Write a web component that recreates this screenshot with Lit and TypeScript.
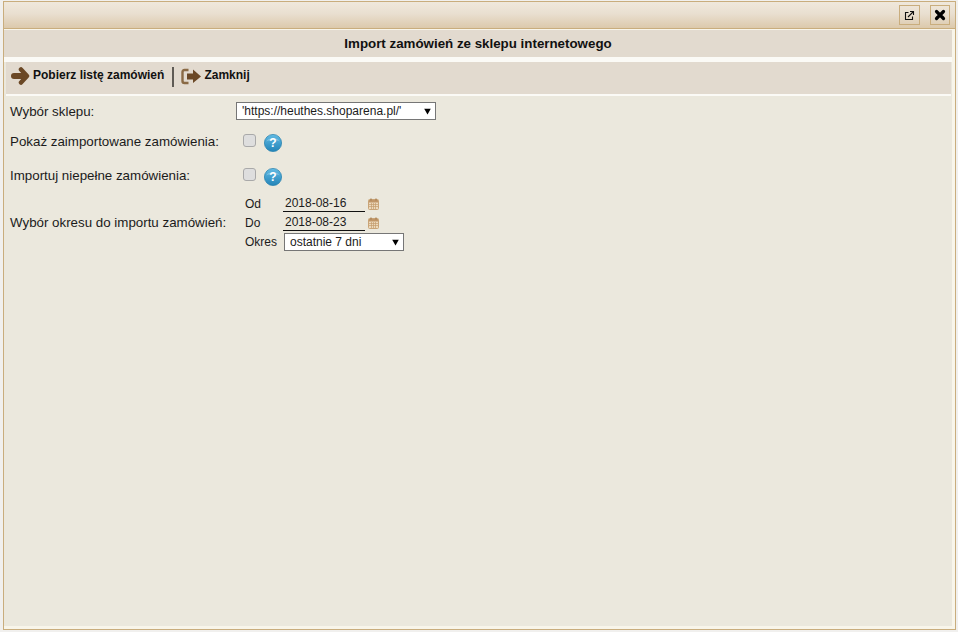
import { LitElement, html, css } from "lit";
import { customElement } from "lit/decorators.js";

const calendar = html`<svg class="cal" width="11" height="12" viewBox="0 0 11 12">
  <rect x=".5" y="1.500" width="10" height="10" rx="1" fill="#ecd9bc" stroke="#c9a477"/>
  <rect x="1" y="2" width="9" height="2.500" fill="#c09668"/>
  <path d="M3 .5v2M8 .5v2" stroke="#a57c50" stroke-width="1.200"/>
  <path d="M1 6.500h9M1 8.500h9M3.500 5v6M5.500 5v6M7.500 5v6" stroke="#c49c6e" stroke-width=".7"/>
</svg>`;

const help = html`<svg class="help" width="18" height="18" viewBox="0 0 18 18">
  <defs>
    <linearGradient id="hg" x1="0" y1="0" x2="0" y2="1">
      <stop offset="0" stop-color="#62bbe4"/><stop offset="1" stop-color="#2384b8"/>
    </linearGradient>
  </defs>
  <circle cx="9" cy="9" r="8.600" fill="url(#hg)" stroke="#2280ad" stroke-width=".7"/>
  <path d="M2.200 7.500C3.500 3 14.500 3 15.800 7.500C12 5.500 6 5.500 2.200 7.500Z" fill="#fff" opacity=".25"/>
  <text x="9" y="13.400" text-anchor="middle" class="q">?</text>
</svg>`;

@customElement("app-root")
export class AppRoot extends LitElement {
  static styles = css`
    :host {
      display: block;
      width: 958px;
      height: 632px;
      box-sizing: border-box;
      padding: 1px 2px 2px 3px;
      background: #f1f0ee;
      font-family: "Liberation Sans", Arial, sans-serif;
      font-size: 13.33px;
      color: #1b1b1b;
    }
    .window {
      height: 100%;
      box-sizing: border-box;
      border: 1px solid #c9ad7d;
      background: #f8f5ea;
      display: flex;
      flex-direction: column;
    }
    .titlebar {
      flex: none;
      height: 27px;
      box-sizing: border-box;
      border-bottom: 1px solid #c9ad7d;
      background: linear-gradient(#f0e8dc, #e9dfd0 45%, #dcc9ac);
      display: flex;
      align-items: center;
      justify-content: flex-end;
      gap: 10px;
      padding: 0 5px 0 0;
    }
    .tbtn {
      width: 20px;
      height: 20px;
      box-sizing: border-box;
      border: 1px solid #c9ad7d;
      display: flex;
      align-items: center;
      justify-content: center;
    }
    .tbtn.wide {
      width: 21px;
    }
    .body {
      flex: 1;
      display: flex;
      flex-direction: column;
      margin: 1px 3px 3px 0;
      background: #ebe8dd;
    }
    .heading {
      height: 27px;
      background: #e2dacf;
      font-weight: 700;
      color: #111;
      display: flex;
      align-items: center;
      justify-content: center;
    }
    .band {
      height: 5px;
      background: #fbfaf6;
    }
    .toolbar {
      margin: 0 1px 0 2px;
      height: 34px;
      box-sizing: border-box;
      border-bottom: 2px solid #fbfaf6;
      background: #e2dacf;
      display: flex;
      align-items: flex-start;
      padding: 4px 0 0 4px;
      font-weight: 700;
      font-size: 12px;
      color: #111;
    }
    .tool {
      display: flex;
      align-items: flex-start;
      gap: 3px;
    }
    .tool span {
      line-height: 14px;
      margin-top: 2px;
    }
    .sep {
      width: 2px;
      height: 20px;
      background: #5f5b55;
      margin: 1px 7px 0 8px;
    }
    .form {
      padding: 6px 0 0 6px;
      display: grid;
      grid-template-columns: 226px 1fr;
      line-height: 15px;
    }
    .r1 {
      height: 18px;
      display: flex;
      align-items: center;
    }
    .r2 {
      height: 34px;
      margin-top: 14px;
    }
    .r3 {
      height: 25px;
    }
    .check {
      display: flex;
      align-items: flex-start;
      padding-left: 7px;
    }
    input[type="checkbox"] {
      appearance: none;
      margin: 0;
      width: 13px;
      height: 13px;
      box-sizing: border-box;
      border: 1px solid #a9a9a9;
      border-radius: 3px;
      background: #dedede;
    }
    .help {
      margin-left: 8px;
    }
    .q {
      font: 700 12px "Liberation Sans", sans-serif;
      fill: #fff;
    }
    select {
      appearance: none;
      font: 12px "Liberation Sans", Arial, sans-serif;
      color: #1b1b1b;
      border: 1px solid #767676;
      border-radius: 0;
      height: 18px;
      margin: 0;
      background: #fff
        url("data:image/svg+xml,%3Csvg xmlns='http://www.w3.org/2000/svg' width='7' height='7'%3E%3Cpath d='M.2 .8H6.800L3.500 6.600Z' fill='%23000'/%3E%3C/svg%3E")
        no-repeat;
    }
    .shop {
      width: 200px;
      padding: 0 0 0 5px;
      background-position: 187px 5px;
    }
    .period {
      width: 120px;
      margin-left: 1px;
      padding: 0 0 0 5px;
      background-position: 107px 5px;
    }
    .wlabel {
      display: flex;
      align-items: center;
      padding-bottom: 2px;
    }
    .dates {
      display: grid;
      grid-template-columns: 38px auto;
      grid-template-rows: 19px 19px 22px;
      padding-left: 9px;
      align-items: center;
      font-size: 12px;
    }
    .tag {
      margin-top: 3px;
    }
    .date {
      display: flex;
      align-items: flex-end;
      height: 100%;
    }
    .period-cell {
      display: flex;
      align-items: center;
    }
    .dval {
      width: 82px;
      height: 18px;
      box-sizing: border-box;
      border-bottom: 1px solid #111;
      padding-left: 2px;
      line-height: 18px;
      margin-right: 3px;
    }
    .cal {
      display: block;
      margin-bottom: 2px;
    }
  `;

  render() {
    return html`
      <div class="window">
        <div class="titlebar">
          <div class="tbtn wide">
            <svg width="11" height="11" viewBox="0 0 11 11" fill="none" stroke="#111" stroke-width="1.100">
              <path d="M4.500 2.500H1.500V9.500H8.500V6.500"/>
              <path d="M4 7L9 2M6 1.500H9.500V5"/>
            </svg>
          </div>
          <div class="tbtn">
            <svg width="12" height="12" viewBox="0 0 12 12">
              <path d="M2.500 2.500L9.500 9.500M9.500 2.500L2.500 9.500" stroke="#000" stroke-width="3.200" stroke-linecap="round"/>
            </svg>
          </div>
        </div>
        <div class="body">
          <div class="heading">Import zamówień ze sklepu internetowego</div>
          <div class="band"></div>
          <div class="toolbar">
            <div class="tool">
              <svg width="20" height="20" viewBox="0 0 20 20">
                <path d="M4 10H15" fill="none" stroke="#6b4826" stroke-width="6" stroke-linecap="round"/>
                <path d="M11 3.500L17 10L11 16.500" fill="none" stroke="#6b4826" stroke-width="4.500" stroke-linecap="round" stroke-linejoin="round"/>
              </svg>
              <span>Pobierz listę zamówień</span>
            </div>
            <div class="sep"></div>
            <div class="tool">
              <svg width="20" height="20" viewBox="0 0 20 20">
                <path d="M7.500 4H3.500Q1.500 4 1.500 6V15Q1.500 17 3.500 17H7.500" fill="none" stroke="#8a6a45" stroke-width="2.400"/>
                <path d="M6 7.500H12V3.500L20 10.500L12 17V13.500H6Z" fill="#6b4826"/>
              </svg>
              <span>Zamknij</span>
            </div>
          </div>
          <div class="form">
            <div class="lbl r1">Wybór sklepu:</div>
            <div class="r1">
              <select class="shop"><option>'https://heuthes.shoparena.pl/'</option></select>
            </div>
            <div class="lbl r2">Pokaż zaimportowane zamówienia:</div>
            <div class="r2 check"><input type="checkbox" disabled />${help}</div>
            <div class="lbl r3">Importuj niepełne zamówienia:</div>
            <div class="r3 check"><input type="checkbox" disabled />${help}</div>
            <div class="wlabel">Wybór okresu do importu zamówień:</div>
            <div class="dates">
              <div class="tag">Od</div>
              <div class="date"><div class="dval">2018-08-16</div>${calendar}</div>
              <div class="tag">Do</div>
              <div class="date"><div class="dval">2018-08-23</div>${calendar}</div>
              <div>Okres</div>
              <div class="period-cell">
                <select class="period"><option>ostatnie 7 dni</option></select>
              </div>
            </div>
          </div>
        </div>
      </div>
    `;
  }
}
